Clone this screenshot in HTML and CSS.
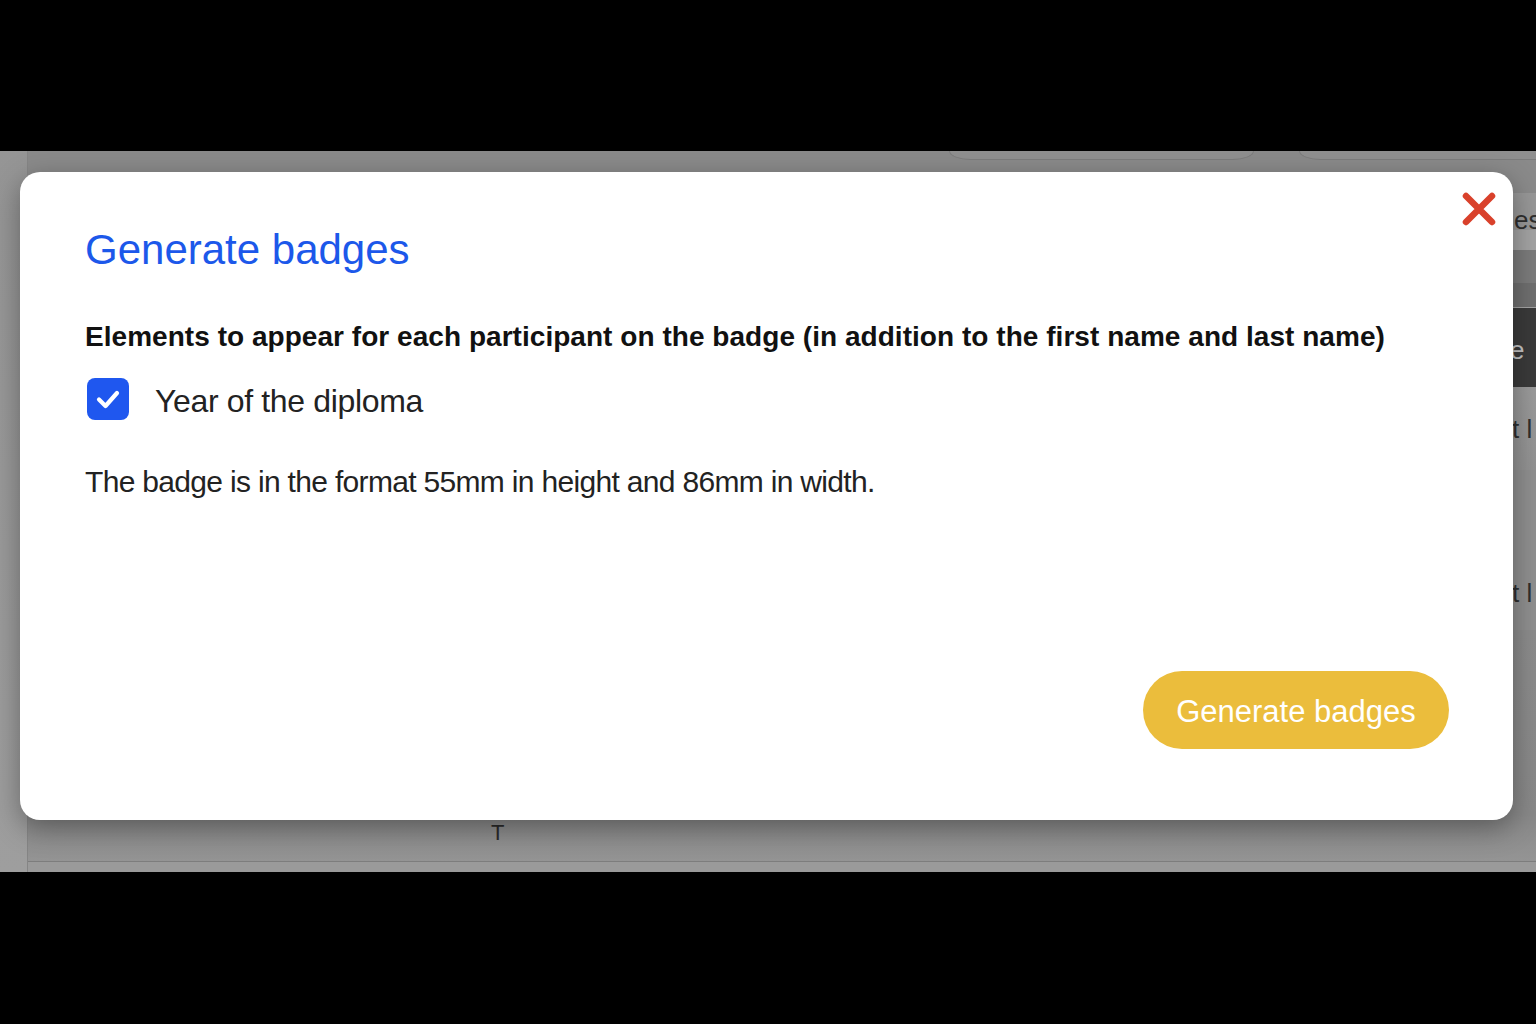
FILE: index.html
```html
<!DOCTYPE html>
<html lang="en">
<head>
<meta charset="utf-8">
<title>Generate badges</title>
<link rel="stylesheet" href="styles.css">
</head>
<body>
<div class="screen">
  <div class="letterbox"></div>
  <div class="app">
    <div class="page">
      <div class="side"></div>
      <div class="main">
        <div class="tabs">
          <div class="tab tab-a"></div>
          <div class="tab tab-b"></div>
        </div>
        <div class="row r1"></div>
        <div class="row r2"><span class="bgtext">es</span></div>
        <div class="row r3"></div>
        <div class="row r4"></div>
        <div class="row r5"></div>
        <div class="row r6"><span class="bgtext light">e</span></div>
        <div class="row r7"><span class="bgtext">t l</span></div>
        <div class="row r8"></div>
        <div class="row r9"><span class="bgtext">t l</span></div>
        <div class="row r10"><span class="tee">T</span></div>
        <div class="row r11"></div>
      </div>
    </div>

    <div class="modal" role="dialog" aria-labelledby="modal-title">
      <button class="close" aria-label="Close">
        <svg viewBox="0 0 34 34" width="34" height="34">
          <path d="M4 4 L30 30 M30 4 L4 30" stroke="#d9412b" stroke-width="6.5" stroke-linecap="round" fill="none"/>
        </svg>
      </button>
      <h2 id="modal-title" class="title">Generate badges</h2>
      <p class="label">Elements to appear for each participant on the badge (in addition to the first name and last name)</p>
      <label class="check-row">
        <span class="checkbox">
          <svg viewBox="0 0 42 42" width="42" height="42">
            <path d="M12 21.5 L18.5 28 L30 15" stroke="#fff" stroke-width="4.2" stroke-linecap="round" stroke-linejoin="round" fill="none"/>
          </svg>
        </span>
        <span class="check-text">Year of the diploma</span>
      </label>
      <p class="info">The badge is in the format 55mm in height and 86mm in width.</p>
      <div class="actions">
        <button class="primary">Generate badges</button>
      </div>
    </div>
  </div>
  <div class="letterbox bottom"></div>
</div>
</body>
</html>
```

FILE: styles.css
```css
* { box-sizing: border-box; }

html, body {
  margin: 0;
  padding: 0;
  background: #000;
}

body {
  font-family: "Liberation Sans", Arial, sans-serif;
}

.screen {
  width: 1536px;
  height: 1024px;
  display: flex;
  flex-direction: column;
  overflow: hidden;
}

.letterbox {
  height: 151px;
  background: #000;
  flex: none;
}
.letterbox.bottom {
  height: 152px;
}

.app {
  position: relative;
  height: 721px;
  flex: none;
  background: #8b8b8b;
  overflow: hidden;
}

/* background page (dimmed) */
.page {
  display: flex;
  height: 721px;
}
.side {
  width: 28px;
  background: linear-gradient(#959595, #9e9e9e);
  border-right: 1px solid #858585;
  flex: none;
}
.main {
  flex: 1;
  display: flex;
  flex-direction: column;
  min-width: 0;
}

.tabs {
  height: 9px;
  display: flex;
  padding-left: 921px;
  background: #8a8a8a;
  flex: none;
}
.tab {
  height: 9px;
  background: #8f8f8f;
  border: 1px solid #7c7c7c;
  border-top: none;
  border-radius: 0 0 22px 22px / 0 0 9px 9px;
}
.tab-a { width: 305px; margin-right: 45px; flex: none; }
.tab-b { flex: 1; margin-right: -40px; }

.row {
  display: flex;
  align-items: center;
  padding-left: 1484px;
  white-space: nowrap;
  overflow: hidden;
  flex: none;
}
.bgtext {
  font-size: 26px;
  line-height: 30px;
  color: #2e2e2e;
}
.bgtext.light { color: #c4c4c4; }

.r1 { height: 33px; background: #8a8a8a; }
.r2 {
  height: 37px;
  background: #979797;
  padding-left: 1486px;
  align-items: flex-end;
}
.r2 .bgtext { line-height: 20px; }
.r3 { height: 20px; background: #a3a3a3; }
.r4 { height: 33px; background: #7b7b7b; }
.r5 { height: 25px; background: #6f6f6f; border-bottom: 1px solid #a4a4a4; }
.r6 { height: 79px; background: #3a3a3a; padding-left: 1482px; padding-top: 4px; }
.r7 { height: 83px; background: linear-gradient(#9a9a9a, #929292); }
.r8 { height: 85px; background: #8f8f8f; }
.r9 { height: 75px; background: #8f8f8f; }
.r10 {
  flex: 1;
  background: linear-gradient(#8c8c8c, #888 80%, #949494);
  border-bottom: 1px solid #7d7d7d;
  align-items: flex-end;
  padding-left: 463px;
  padding-bottom: 15px;
}
.r11 { height: 10px; background: #9a9a9a; }

.tee {
  font-size: 22px;
  line-height: 26px;
  color: #2a2a2a;
}

/* modal */
.modal {
  position: absolute;
  left: 20px;
  top: 21px;
  width: 1493px;
  height: 648px;
  background: #fff;
  border-radius: 20px;
  box-shadow: 0 8px 28px rgba(0, 0, 0, 0.35);
  padding: 54px 64px 71px 66px;
  display: flex;
  flex-direction: column;
}

.close {
  position: absolute;
  top: 20px;
  right: 17px;
  width: 34px;
  height: 34px;
  padding: 0;
  border: none;
  background: none;
  cursor: pointer;
}
.close svg { display: block; }

.title {
  margin: 0 0 0 -1px;
  font-size: 42px;
  line-height: 48px;
  font-weight: 400;
  color: #1c58ea;
}

.label {
  margin: 46px 0 0 -1px;
  font-size: 28px;
  line-height: 34px;
  font-weight: 700;
  letter-spacing: 0.04px;
  color: #111;
}

.check-row {
  margin-top: 24px;
  display: flex;
  align-items: center;
  gap: 26px;
  height: 42px;
}
.checkbox {
  width: 42px;
  height: 42px;
  border-radius: 8px;
  background: #1f57ef;
  flex: none;
  margin-left: 1px;
}
.checkbox svg { display: block; }
.check-text {
  font-size: 32px;
  line-height: 38px;
  letter-spacing: -0.35px;
  color: #222;
  margin-top: 4px;
}

.info {
  margin: 44px 0 0 -1px;
  font-size: 30px;
  line-height: 36px;
  letter-spacing: -0.68px;
  color: #222;
}

.actions {
  margin-top: auto;
  display: flex;
  justify-content: flex-end;
}
.primary {
  height: 78px;
  width: 306px;
  border: none;
  border-radius: 39px;
  background: #ebbd3c;
  color: #fff;
  font-family: "Liberation Sans", Arial, sans-serif;
  font-size: 31px;
  padding: 4px 0 0;
  cursor: pointer;
}
```
